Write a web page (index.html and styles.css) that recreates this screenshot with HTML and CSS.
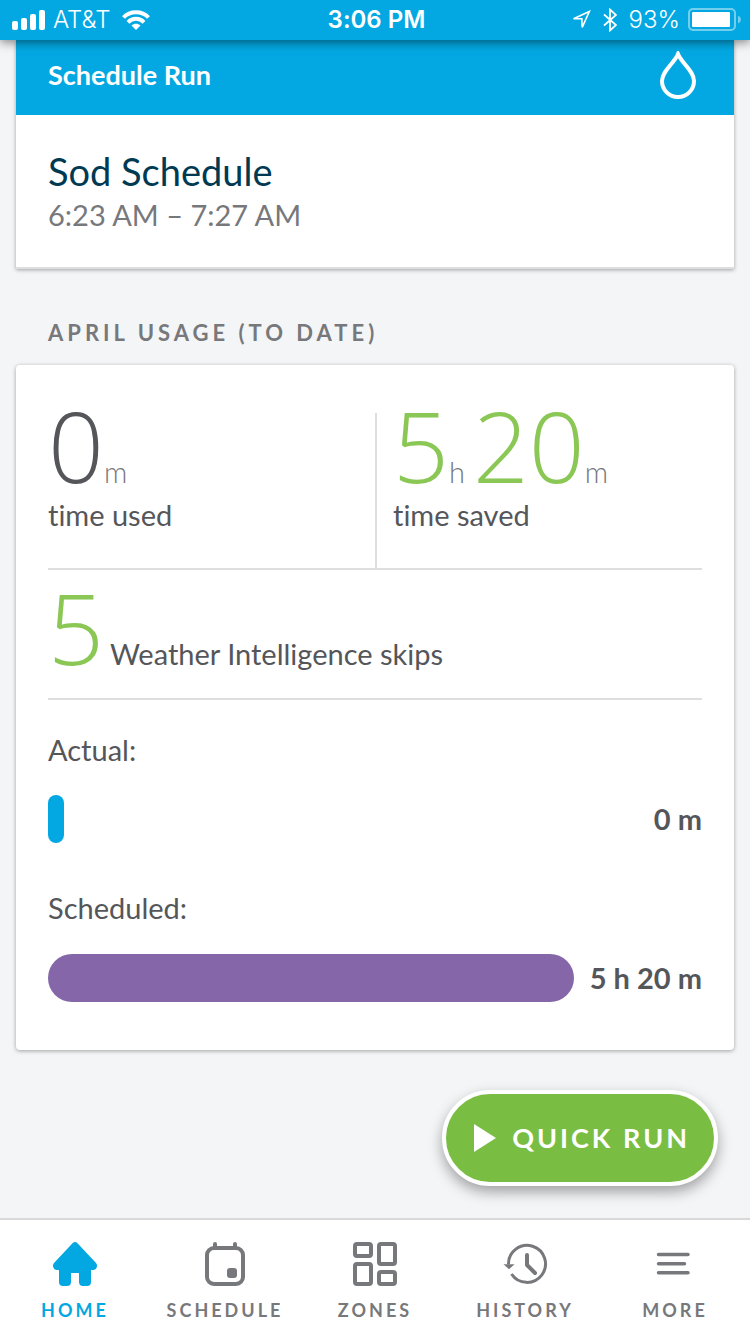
FILE: index.html
```html
<!DOCTYPE html>
<html lang="en">
<head>
  <meta charset="UTF-8">
  <meta name="viewport" content="width=device-width, initial-scale=1">
  <title>Home</title>
  <link rel="stylesheet" href="styles.css">
</head>
<body>

<header class="status-bar">
  <div class="status-left">
    <svg class="signal" width="34" height="20" viewBox="0 0 34 20" fill="#fff">
      <rect x="1" y="11" width="6" height="9" rx="2"/>
      <rect x="10" y="8" width="6" height="12" rx="2"/>
      <rect x="19" y="4" width="6" height="16" rx="2"/>
      <rect x="28" y="0" width="6" height="20" rx="2"/>
    </svg>
    <span>AT&amp;T</span>
    <svg class="wifi" width="28" height="20" viewBox="0 0 28 20" fill="none" stroke="#fff" stroke-width="4">
      <path d="M1.500 7.500C8 .5 20 .5 26.500 7.500"/>
      <path d="M6 12.300c4.500-4.600 11.500-4.600 16 0"/>
      <path d="M14 20l-4.500-4.500c2.500-2.300 6.500-2.300 9 0z" fill="#fff" stroke="none"/>
    </svg>
  </div>
  <div class="status-time">3:06 PM</div>
  <div class="status-right">
    <svg class="location" width="20" height="20" viewBox="0 0 20 20" fill="none" stroke="#fff" stroke-width="1.600">
      <path d="M18.300 1.500L2.500 8.800h8.300l.4 8.500z"/>
    </svg>
    <svg class="bluetooth" width="14" height="24" viewBox="0 0 14 24" fill="none" stroke="#fff" stroke-width="1.800">
      <path d="M1 6.500l12 10.500-6 5.500v-21l6 5.500L1 17.500"/>
    </svg>
    <span>93%</span>
    <svg class="battery" width="54" height="24" viewBox="0 0 54 24">
      <rect x="1" y="1" width="46" height="21" rx="4" fill="none" stroke="#fff" stroke-opacity=".45" stroke-width="2"/>
      <rect x="4" y="4" width="38" height="15" rx="1" fill="#fff"/>
      <path d="M50 7.500q3 1.500 3 4t-3 4z" fill="#fff" fill-opacity=".45"/>
    </svg>
  </div>
</header>

<main class="content">
  <section class="card run-card">
    <div class="run-header">
      <h2>Schedule Run</h2>
      <svg width="48" height="48" viewBox="0 0 48 48" fill="none" stroke="#fff" stroke-width="4">
        <path d="M24 3C20.500 12 8 20 8 30a16 16 0 0 0 32 0C40 20 27.500 12 24 3z"/>
      </svg>
    </div>
    <div class="run-body">
      <h3>Sod Schedule</h3>
      <p>6:23 AM – 7:27 AM</p>
    </div>
  </section>

  <h2 class="section-title">April Usage (to date)</h2>

  <section class="card usage-card">
    <div class="stats">
      <div class="stat">
        <div class="figure"><span class="num">0</span><span class="unit">m</span></div>
        <p>time used</p>
      </div>
      <div class="stat saved">
        <div class="figure"><span class="num">5</span><span class="unit">h</span><span class="num">20</span><span class="unit">m</span></div>
        <p>time saved</p>
      </div>
    </div>

    <div class="skips">
      <span class="num">5</span>
      <span>Weather Intelligence skips</span>
    </div>

    <div class="usage">
      <p>Actual:</p>
      <div class="usage-row">
        <div class="track"><div class="bar actual" style="width: 0%"></div></div>
        <strong>0 m</strong>
      </div>
    </div>

    <div class="usage">
      <p>Scheduled:</p>
      <div class="usage-row">
        <div class="track"><div class="bar scheduled" style="width: 100%"></div></div>
        <strong>5 h 20 m</strong>
      </div>
    </div>
  </section>

  <button type="button" class="quick-run">
    <svg width="22" height="28" viewBox="0 0 22 28" fill="#fff"><path d="M0 0l22 14L0 28z"/></svg>
    <span>Quick Run</span>
  </button>
</main>

<nav class="tabs">
  <a href="#home" class="active">
    <svg width="48" height="48" viewBox="0 0 48 48" fill="currentColor">
      <path d="M21.500 3.200q2.500-2.400 5 0L45 23q1.500 2 .800 4-.800 3-3.800 3h-2v12q0 4-4 4h-4q-4 0-4-4v-9h-8v9q0 4-4 4h-4q-4 0-4-4V30H6q-3 0-3.800-3-.700-2 .800-4z"/>
    </svg>
    <span>Home</span>
  </a>
  <a href="#schedule">
    <svg width="48" height="48" viewBox="0 0 48 48" fill="none" stroke="currentColor" stroke-width="4">
      <rect x="6" y="8" width="36" height="36" rx="7"/>
      <path d="M14 8V4M34 8V4" stroke-linecap="round"/>
      <rect x="26" y="28" width="10" height="10" rx="3" fill="currentColor" stroke="none"/>
    </svg>
    <span>Schedule</span>
  </a>
  <a href="#zones">
    <svg width="48" height="48" viewBox="0 0 48 48" fill="none" stroke="currentColor" stroke-width="4">
      <rect x="4" y="4" width="16" height="12" rx="2"/>
      <rect x="28" y="4" width="16" height="20" rx="2"/>
      <rect x="4" y="24" width="16" height="20" rx="2"/>
      <rect x="28" y="32" width="16" height="12" rx="2"/>
    </svg>
    <span>Zones</span>
  </a>
  <a href="#history">
    <svg width="48" height="48" viewBox="0 0 48 48" fill="none" stroke="currentColor" stroke-width="3">
      <path d="M7.500 24.500A18.500 18.500 0 1 1 10.500 34"/>
      <path d="M26 15v10l8 8" stroke-width="4" stroke-linecap="round" stroke-linejoin="round"/>
      <path d="M2.500 24.200h11l-5.500 5z" fill="currentColor" stroke="none"/>
    </svg>
    <span>History</span>
  </a>
  <a href="#more">
    <svg width="48" height="48" viewBox="0 0 48 48" fill="none" stroke="currentColor" stroke-width="3.500" stroke-linecap="round">
      <path d="M7.500 14.500h29.500M7.500 23.700h26M7.500 32.800h29.500"/>
    </svg>
    <span>More</span>
  </a>
</nav>

</body>
</html>
```

FILE: styles.css
```css
* {
  box-sizing: border-box;
}

body {
  margin: 0;
  min-height: 100vh;
  display: flex;
  flex-direction: column;
  font-family: Lato, 'Open Sans', sans-serif;
  font-size: 29px;
  font-variant-ligatures: none;
  line-height: 40px;
  background-color: #f4f5f7;
  color: #55565a;
}

h2, h3, p {
  margin: 0;
  font-weight: 400;
}

svg {
  display: block;
  flex: none;
}

/* status bar */
.status-bar {
  position: sticky;
  top: 0;
  z-index: 2;
  display: grid;
  grid-template-columns: 1fr auto 1fr;
  align-items: center;
  padding: 0 8px 0 11px;
  font-family: Inter, sans-serif;
  font-size: 24px;
  font-weight: 300;
  color: #fff;
  background-color: #03a8e2;
  box-shadow: 0 2px 10px rgba(0, 0, 0, 0.5);
}

.status-left, .status-right {
  display: flex;
  align-items: center;
  gap: 8px;
}

.status-left .wifi {
  margin-left: 4px;
}

.status-time {
  font-weight: 600;
}

.status-right {
  justify-content: flex-end;
}

.status-right .bluetooth {
  margin: 0 4px;
}

/* cards */
.content {
  flex: 1;
  display: flex;
  flex-direction: column;
  padding: 0 16px;
}

.card {
  background-color: #fff;
  border-radius: 4px;
  box-shadow: 0 1px 4px rgba(0, 0, 0, 0.35);
}

.run-card {
  border-radius: 0;
  border-bottom: 2px solid #dededf;
}

.run-header {
  display: flex;
  align-items: center;
  justify-content: space-between;
  padding: 11px 32px 16px;
  color: #fff;
  background-color: #03a8e2;
}

.run-header h2 {
  font-size: 27px;
  font-weight: 700;
}

.run-body {
  padding: 32px;
}

.run-body h3 {
  font-size: 38px;
  line-height: 48px;
  color: #003a52;
}

.run-body p {
  color: #77787b;
}

.section-title {
  margin: 48px 32px 16px;
  font-size: 22px;
  font-weight: 700;
  line-height: 32px;
  letter-spacing: 4px;
  text-transform: uppercase;
  color: #77787b;
}

/* usage */
.usage-card {
  padding: 48px 32px;
}

.stats {
  display: grid;
  grid-template-columns: 1fr 1fr;
  border-bottom: 2px solid #dededf;
}

.stat {
  padding-bottom: 33px;
}

.saved {
  padding-left: 16px;
  border-left: 2px solid #dededf;
}

.figure {
  display: flex;
  align-items: baseline;
  margin-bottom: 9px;
}

.num {
  font-family: 'Open Sans', Lato, sans-serif;
  font-size: 98px;
  font-weight: 300;
  line-height: 64px;
}

.unit {
  margin-right: 8px;
  font-weight: 300;
  line-height: 28px;
  color: #77787b;
}

.saved .num, .skips .num {
  color: #8ac755;
}

.skips {
  display: flex;
  align-items: baseline;
  gap: 6px;
  padding: 25px 0 24px;
  border-bottom: 2px solid #dededf;
}

.usage {
  margin-top: 45px;
}

.skips + .usage {
  margin-top: 30px;
}

.usage-row {
  display: flex;
  align-items: center;
  gap: 16px;
  margin-top: 25px;
}

.usage + .usage .usage-row {
  margin-top: 26px;
}

.track {
  flex: 1;
}

.bar {
  min-width: 16px;
  height: 48px;
  border-radius: 24px;
}

.actual {
  background-color: #03a8e2;
}

.scheduled {
  background-color: #8566a9;
}

.quick-run {
  align-self: flex-end;
  display: flex;
  align-items: center;
  gap: 16px;
  margin: 40px 16px 32px;
  padding: 24px 24px 24px 28px;
  border: 4px solid #fff;
  border-radius: 48px;
  font-family: inherit;
  font-size: 27px;
  font-weight: 700;
  line-height: 40px;
  letter-spacing: 3px;
  text-transform: uppercase;
  color: #fff;
  background-color: #79bd43;
  box-shadow: 0 6px 14px rgba(0, 0, 0, 0.35);
  cursor: pointer;
}

/* bottom tabs */
.tabs {
  display: grid;
  grid-template-columns: repeat(5, 1fr);
  padding: 20px 0 12px;
  border-top: 2px solid #d8d8d8;
  background-color: #fff;
}

.tabs a {
  display: flex;
  flex-direction: column;
  align-items: center;
  gap: 10px;
  font-size: 18px;
  font-weight: 700;
  line-height: 24px;
  letter-spacing: 3px;
  text-transform: uppercase;
  text-decoration: none;
  color: #77787b;
}

.tabs .active {
  color: #03a8e2;
}
```
